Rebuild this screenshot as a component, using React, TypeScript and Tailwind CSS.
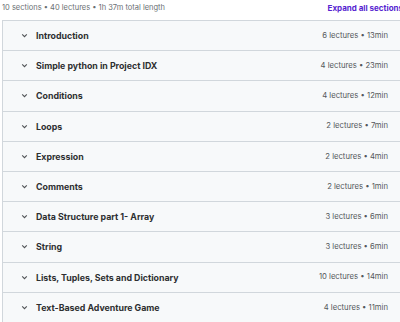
import React from "react";

const sections = [
  ["Introduction", "6 lectures • 13min"],
  ["Simple python in Project IDX", "4 lectures • 23min"],
  ["Conditions", "4 lectures • 12min"],
  ["Loops", "2 lectures • 7min"],
  ["Expression", "2 lectures • 4min"],
  ["Comments", "2 lectures • 1min"],
  ["Data Structure part 1- Array", "3 lectures • 6min"],
  ["String", "3 lectures • 6min"],
  ["Lists, Tuples, Sets and Dictionary", "10 lectures • 14min"],
  ["Text-Based Adventure Game", "4 lectures • 11min"],
];

function Chevron() {
  return (
    <svg width="7" height="5" viewBox="0 0 7 5" className="shrink-0">
      <path d="M1.2 1.3 L3.5 3.6 L5.8 1.3" fill="none" stroke="#505356" strokeWidth="1.1" />
    </svg>
  );
}

export default function App() {
  return (
    <div
      className="w-[400px] h-[322px] overflow-hidden bg-white"
      style={{ fontFamily: "Inter, Roboto, 'Noto Sans', sans-serif" }}
    >
      <div className="w-[404px] pl-[2px]">
        <div className="flex h-[20px] items-center justify-between pb-[4px]">
          <span className="text-[7.5px] text-[#6a6f73]">10 sections • 40 lectures • 1h 37m total length</span>
          <span className="text-[8px] font-bold text-[#5624d0] whitespace-nowrap pr-[1px]">Expand all sections</span>
        </div>
        <div className="border-l border-[#d1d7dc]">
          {sections.map(([title, meta], i) => (
            <div
              key={i}
              className="flex h-[30.2px] items-center border-t border-[#d1d7dc] bg-[#f7f9fa] pl-[18px] pr-[16px]"
            >
              <Chevron />
              <span className="ml-[8px] text-[8.8px] font-bold text-[#2d2f31]">{title}</span>
              <span className="ml-auto text-[7.7px] text-[#54585b]">{meta}</span>
            </div>
          ))}
        </div>
      </div>
    </div>
  );
}
